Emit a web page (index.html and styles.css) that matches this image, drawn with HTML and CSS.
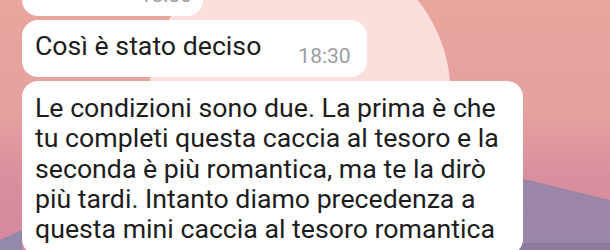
FILE: index.html
```html
<!DOCTYPE html>
<html lang="it">
<head>
    <meta charset="UTF-8">
    <meta name="viewport" content="width=device-width, initial-scale=1.0">
    <title>Chat</title>
    <link rel="stylesheet" href="styles.css">
</head>
<body>
    <main class="chat">
        <div class="bubble bubble-prev">
            <span class="time">18:30</span>
        </div>
        <div class="bubble bubble-inline">
            <p class="text">Così è stato deciso</p>
            <span class="time">18:30</span>
        </div>
        <div class="bubble bubble-long">
            <p class="text">Le condizioni sono due. La prima è che tu completi questa caccia al tesoro e la seconda è più romantica, ma te la dirò più tardi. Intanto diamo precedenza a questa mini caccia al tesoro romantica</p>
        </div>
    </main>
</body>
</html>
```

FILE: styles.css
```css
body {
    margin: 0;
    height: 250px;
    overflow: hidden;
    font-family: Roboto, "Noto Sans", sans-serif;
    color: #1d1d1d;
    background:
        radial-gradient(circle at 300px 94px, #fbdfdc 150px, rgba(251, 223, 220, 0) 151px),
        linear-gradient(#8d7b9d, #8d7b9d) 500px 243px / 110px 7px no-repeat,
        linear-gradient(#9c86a8, #9a86a9) 500px 200px / 110px 50px no-repeat,
        linear-gradient(to bottom left, transparent 50%, #9c86a8 50%) 500px 173px / 110px 27px no-repeat,
        linear-gradient(#9588ad, #9588ad) 0 240px / 22px 10px no-repeat,
        linear-gradient(to bottom right, transparent 50%, #9588ad 50%) 0 230px / 22px 10px no-repeat,
        linear-gradient(180deg, #e8a69e 0%, #e5a19e 45%, #da8f9e 70%, #d4889d 100%);
}
.chat {
    display: flex;
    flex-direction: column;
    align-items: flex-start;
    gap: 4px;
    margin-top: -42px;
    padding-left: 22px;
}
.bubble {
    background-color: #fff;
    border-radius: 16px;
    padding: 11px 16px 11px 13px;
    box-sizing: border-box;
}
.bubble-prev {
    width: 181px;
    height: 58px;
    display: flex;
    justify-content: flex-end;
    align-items: flex-end;
    padding-right: 11px;
}
.bubble-inline {
    display: flex;
    align-items: flex-end;
    gap: 37px;
}
.bubble-long {
    width: 501px;
    padding: 12px 13px 11px 13px;
}
.text {
    margin: 0 0 5px;
    font-size: 26.7px;
    line-height: 30px;
}
.bubble-long .text {
    margin: 0;
    line-height: 30.3px;
}
.time {
    font-size: 21px;
    line-height: 20px;
    color: #9b9ea3;
}
```
